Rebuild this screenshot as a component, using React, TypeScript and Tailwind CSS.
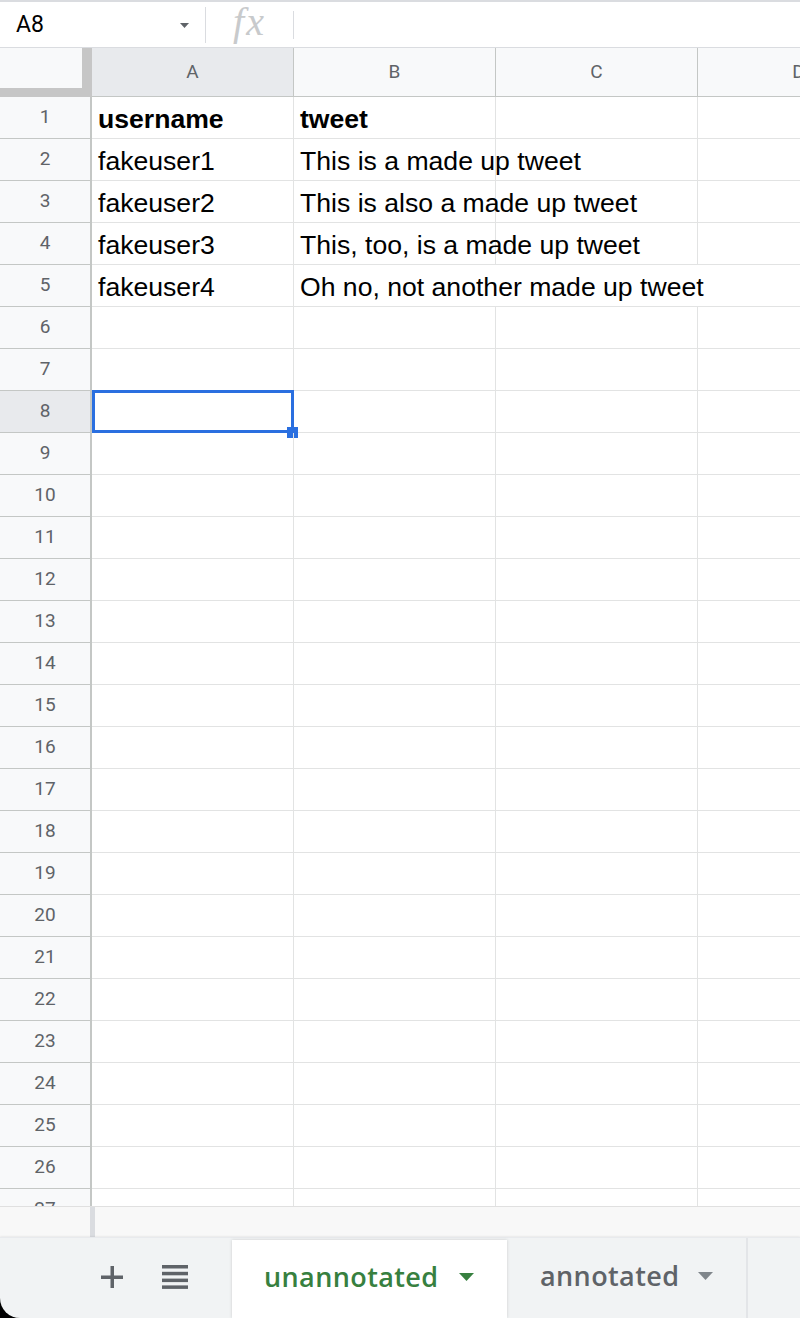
import { ReactNode } from "react";

const columns = ["A", "B", "C", "D"];

const rows: Record<number, [string, string]> = {
  1: ["username", "tweet"],
  2: ["fakeuser1", "This is a made up tweet"],
  3: ["fakeuser2", "This is also a made up tweet"],
  4: ["fakeuser3", "This, too, is a made up tweet"],
  5: ["fakeuser4", "Oh no, not another made up tweet"],
};

const rowNumbers = Array.from({ length: 27 }, (_, i) => i + 1);

function Caret({ className }: { className: string }) {
  return (
    <svg width="15" height="8" viewBox="0 0 15 8" className={className}>
      <polygon points="0,0 15,0 7.5,8" fill="currentColor" />
    </svg>
  );
}

function Cell({ children, bold, wide }: { children?: ReactNode; bold?: boolean; wide?: boolean }) {
  return (
    <div
      className={`${wide ? "flex-1" : "w-[202px] shrink-0 border-r"} h-full border-b border-[#e2e3e3] flex items-center px-[6px] pt-[5px] whitespace-nowrap text-[26.6px] text-black ${bold ? "font-bold" : ""}`}
    >
      {children}
    </div>
  );
}

function Row({ n }: { n: number }) {
  const data = rows[n];
  const selected = n === 8;
  return (
    <div className="flex h-[42px] shrink-0">
      <div
        className={`w-[92px] shrink-0 h-full border-r-2 border-b border-[#c4c7c5] flex items-center justify-center text-[19px] text-[#5f6368] font-['Roboto',sans-serif] ${selected ? "bg-[#e8eaed]" : "bg-[#f8f9fa]"}`}
      >
        {n}
      </div>
      <div className="relative w-[202px] shrink-0 h-full border-r border-b border-[#e2e3e3] flex items-center px-[6px] pt-[5px] whitespace-nowrap text-[26.6px] text-black">
        <span className={n === 1 ? "font-bold" : ""}>{data?.[0]}</span>
        {selected && (
          <>
            <div className="absolute -top-[1px] left-0 -right-[1px] -bottom-[1px] border-[3px] border-[#2a6fe0]" />
            <div className="absolute -right-[5px] -bottom-[6px] w-[11px] h-[11px] bg-[#2a6fe0]" />
          </>
        )}
      </div>
      {n === 5 ? (
        <Cell wide>{data?.[1]}</Cell>
      ) : (
        <>
          <Cell bold={n === 1}>{data?.[1]}</Cell>
          <Cell />
          <Cell />
        </>
      )}
    </div>
  );
}

export default function App() {
  return (
    <div className="w-[800px] h-[1318px] overflow-hidden bg-white flex flex-col font-['Liberation_Sans',Arial,sans-serif]">
      {/* formula bar */}
      <div className="h-[48px] shrink-0 border-t-2 border-b border-[#dadce0] flex items-center">
        <div className="w-[205px] h-full flex items-center justify-between pl-[16px] pr-[16px] pt-[2px] font-['Roboto',sans-serif] text-[23px] text-black">
          <span>A8</span>
          <Caret className="w-[9px] h-[5px] text-[#5f6368]" />
        </div>
        <div className="w-px h-[36px] bg-[#dadce0]" />
        <div className="w-[87px] flex justify-center font-['Liberation_Serif',serif] italic text-[40px] tracking-[2px] text-[#c8cacc] leading-none pb-[6px]">
          fx
        </div>
        <div className="w-px h-[28px] bg-[#dadce0]" />
      </div>

      {/* column headers */}
      <div className="flex h-[49px] shrink-0">
        <div className="w-[92px] shrink-0 h-full bg-[#f8f9fa] border-r-[10px] border-b-[9px] border-[#c6c6c6]" />
        {columns.map((c) => (
          <div
            key={c}
            className={`w-[202px] shrink-0 h-full border-r border-b border-[#c4c7c5] flex items-center justify-center text-[19px] text-[#5f6368] font-['Roboto',sans-serif] ${c === "A" ? "bg-[#e8eaed]" : "bg-[#f8f9fa]"}`}
          >
            {c}
          </div>
        ))}
      </div>

      {/* grid */}
      <div className="h-[1109px] shrink-0 overflow-hidden flex flex-col">
        {rowNumbers.map((n) => (
          <Row key={n} n={n} />
        ))}
      </div>

      {/* horizontal scroll area */}
      <div className="h-[31px] shrink-0 border-t border-[#e0e0e0] bg-[#f8f8f8] flex">
        <div className="w-[90px] shrink-0" />
        <div className="w-[5px] h-full bg-[#dadce0]" />
      </div>

      {/* sheet tabs */}
      <div className="flex-1 bg-black">
        <div className="h-full bg-[#f1f3f4] rounded-bl-[20px] flex border-t border-[#e8eaed] shadow-[0_-1px_2px_rgba(0,0,0,0.06)]">
          <div className="w-[232px] shrink-0 flex items-center pb-[2px]">
            <svg width="22" height="22" viewBox="0 0 22 22" className="ml-[101px] text-[#5f6368]">
              <rect x="9.5" y="0" width="3.5" height="22" fill="currentColor" />
              <rect x="0" y="9.5" width="22" height="3.5" fill="currentColor" />
            </svg>
            <svg width="26" height="24" viewBox="0 0 26 24" className="ml-[39px] text-[#5f6368]">
              <rect x="0" y="0" width="26" height="3.5" fill="currentColor" />
              <rect x="0" y="6.8" width="26" height="3.5" fill="currentColor" />
              <rect x="0" y="13.6" width="26" height="3.5" fill="currentColor" />
              <rect x="0" y="20.4" width="26" height="3.5" fill="currentColor" />
            </svg>
          </div>
          <div className="w-[275px] shrink-0 bg-white mt-[2px] pb-[4px] shadow-[0_0_3px_rgba(60,64,67,0.2)] flex items-center pl-[32px] font-['Open_Sans',sans-serif] font-semibold text-[27px] tracking-[0.4px] text-[#37803f]">
            <span>unannotated</span>
            <Caret className="ml-[20px] text-[#37803f]" />
          </div>
          <div className="w-[241px] shrink-0 pb-[4px] border-r-2 border-[#e3e5e8] flex items-center pl-[33px] font-['Open_Sans',sans-serif] font-semibold text-[27px] tracking-[0.4px] text-[#5f6368]">
            <span>annotated</span>
            <Caret className="ml-[19px] text-[#80868b]" />
          </div>
        </div>
      </div>
    </div>
  );
}
